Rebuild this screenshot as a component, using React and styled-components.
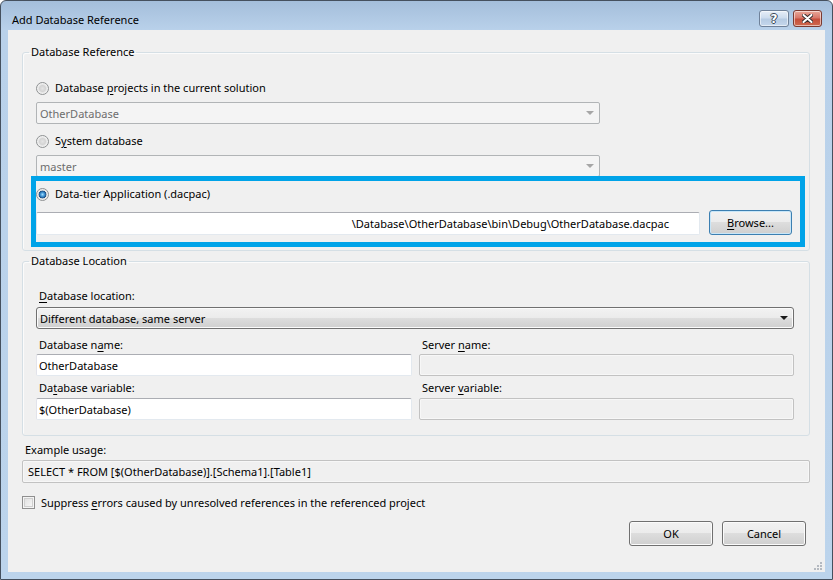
import React from "react";
import styled, { createGlobalStyle } from "styled-components";

const GlobalStyle = createGlobalStyle`
  html, body {
    margin: 0;
    padding: 0;
    background: #ffffff;
  }
  body {
    font-family: "Noto Sans", "Open Sans", sans-serif;
    font-size: 11px;
    color: #000;
  }
`;

// window frame
const Window = styled.div`
  width: 833px;
  height: 580px;
  box-sizing: border-box;
  border: 1px solid #45505e;
  border-radius: 6px 6px 0 0;
  background: linear-gradient(#a4bedb 0px, #b9d1ea 29px, #bcd4ec 100%);
  display: flex;
  flex-direction: column;
  padding: 0 7px 7px 7px;
  overflow: hidden;
`;

const TitleBar = styled.div`
  height: 29px;
  display: flex;
  align-items: flex-start;
  justify-content: space-between;
`;

const Title = styled.div`
  padding: 11px 0 0 4px;
  line-height: 16px;
  font-size: 11px;
  color: #000;
`;

const Caption = styled.div`
  display: flex;
  gap: 4px;
  margin: 9px 3px 0 0;
`;

const CaptionButton = styled.div`
  width: ${(p) => (p.$close ? 29 : 30)}px;
  height: 17px;
  box-sizing: border-box;
  border-radius: 3px;
  border: 1px solid ${(p) => (p.$close ? "#7a3a31" : "#6f8199")};
  box-shadow: inset 0 0 0 1px rgba(255, 255, 255, 0.55);
  background: ${(p) =>
    p.$close
      ? "linear-gradient(#e9a899 0%, #d8786a 45%, #c54e3b 55%, #cf6a50 100%)"
      : "linear-gradient(#e6eef8 0%, #cddcee 45%, #b6cbe3 55%, #c5d7ec 100%)"};
  display: flex;
  align-items: center;
  justify-content: center;
  color: #fff;
  font-family: "DejaVu Sans", sans-serif;
  font-weight: bold;
  font-size: 12px;
  line-height: 1;
  text-shadow: -1px 0 #3a4656, 1px 0 #3a4656, 0 -1px #3a4656, 0 1px #3a4656;
`;

const Client = styled.div`
  flex: 1;
  position: relative;
  background: #f0f0f0;
  padding: 14px 15px 0 14px;
  display: flex;
  flex-direction: column;
`;

// group boxes
const Group = styled.fieldset`
  margin: 0;
  padding: 0;
  min-inline-size: 0;
  border: 1px solid #d5dfe5;
  border-radius: 3px;
  box-shadow: inset 1px 1px 0 #fbfbfb;
  & + & {
    margin-top: 2px;
  }
`;

const Legend = styled.legend`
  margin-left: 6px;
  padding: 0 2px;
  line-height: 16px;
  font-size: 11px;
`;

const GroupBody = styled.div`
  position: relative;
  padding: ${(p) => p.$pad};
  display: flex;
  flex-direction: column;
`;

const RadioRow = styled.label`
  display: flex;
  align-items: center;
  gap: 6px;
  height: 16px;
  line-height: 16px;
  margin-top: ${(p) => p.$top}px;
  padding-top: 1px;
`;

const Radio = styled.span`
  width: 13px;
  height: 13px;
  box-sizing: border-box;
  border-radius: 50%;
  border: 1px solid #8e9192;
  background: ${(p) =>
    p.$checked
      ? "radial-gradient(circle at 50% 50%, #9fdcff 0px, #3f94d4 2px, #1b4f86 3.6px, #e2e2e2 4.2px, #f6f6f6 6px)"
      : "radial-gradient(circle at 50% 50%, #e4e4e4 0px, #d4d4d4 3px, #ececec 4.5px, #f8f8f8 6px)"};
  flex: none;
`;

const Key = styled.span`
  text-decoration: underline;
  text-underline-offset: 2px;
`;

const Combo = styled.div`
  position: relative;
  box-sizing: border-box;
  height: 22px;
  width: ${(p) => p.$width || "auto"};
  margin-top: ${(p) => p.$top}px;
  border-radius: ${(p) => (p.$disabled ? 2 : 3)}px;
  border: 1px solid ${(p) => (p.$disabled ? "#b1b4b6" : "#707070")};
  background: ${(p) =>
    p.$disabled
      ? "#f4f4f4"
      : "linear-gradient(#f2f2f2 0%, #ebebeb 50%, #dddddd 50%, #cfcfcf 100%)"};
  box-shadow: ${(p) => (p.$disabled ? "none" : "inset 0 0 0 1px #fbfbfb")};
  color: ${(p) => (p.$disabled ? "#6d6d6d" : "#000")};
  padding-left: 3px;
  line-height: 21px;
  &::after {
    content: "";
    position: absolute;
    right: 5px;
    top: 8px;
    border-left: 4px solid transparent;
    border-right: 4px solid transparent;
    border-top: 4px solid ${(p) => (p.$disabled ? "#a6a6a6" : "#1a1a1a")};
  }
`;

const Highlight = styled.div`
  position: absolute;
  left: 8px;
  top: 116px;
  width: 774px;
  height: 71px;
  box-sizing: border-box;
  border: 5px solid #00a3e8;
  pointer-events: none;
`;

const BrowseRow = styled.div`
  display: flex;
  align-items: flex-end;
  gap: 9px;
  margin-top: 8px;
`;

const TextBox = styled.div`
  box-sizing: border-box;
  height: ${(p) => p.$h || 22}px;
  width: ${(p) => p.$width || "auto"};
  margin-top: ${(p) => p.$top || 0}px;
  border: 1px solid;
  border-color: #abadb3 #e3e9ef #e3e9ef #e2e3ea;
  border-radius: 2px;
  background: #fff;
  padding: 0 ${(p) => (p.$right ? "30px" : "2px")} 0 2px;
  text-align: ${(p) => (p.$right ? "right" : "left")};
  line-height: ${(p) => (p.$h || 22) - 1}px;
  white-space: nowrap;
  overflow: hidden;
`;

const ReadOnlyBox = styled.div`
  box-sizing: border-box;
  height: ${(p) => p.$h || 22}px;
  border: 1px solid #c2c2c2;
  border-radius: 2px;
  background: #f0f0f0;
  box-shadow: inset 0 0 0 1px #f7f7f7;
  padding-left: 5px;
  line-height: ${(p) => (p.$h || 22) - 1}px;
  margin-top: ${(p) => p.$top || 0}px;
`;

const Button = styled.button`
  box-sizing: border-box;
  width: ${(p) => p.$width}px;
  height: 25px;
  padding: 0;
  border-radius: 3px;
  border: 1px solid ${(p) => (p.$focused ? "#3c7fb1" : "#707070")};
  box-shadow: inset 0 0 0 1px ${(p) => (p.$focused ? "#c8e6f8" : "#fbfbfb")};
  background: linear-gradient(#f2f2f2 0%, #ebebeb 50%, #dddddd 50%, #cfcfcf 100%);
  font-family: inherit;
  font-size: 11px;
  color: #000;
  line-height: 22px;
`;

const Label = styled.div`
  height: 16px;
  line-height: 17px;
  padding-left: 3px;
  margin-top: ${(p) => p.$top || 0}px;
`;

const FieldGrid = styled.div`
  display: grid;
  grid-template-columns: 376px 375px;
  column-gap: 7px;
  margin-top: 7px;
`;

const FieldColumn = styled.div`
  display: flex;
  flex-direction: column;
`;

const CheckRow = styled.label`
  display: flex;
  align-items: center;
  gap: 6px;
  height: 16px;
  line-height: 16px;
  margin-top: 11px;
  & > span:last-child {
    padding-top: 1px;
  }
`;

const CheckBox = styled.span`
  width: 13px;
  height: 13px;
  box-sizing: border-box;
  border: 1px solid #8f8f8f;
  background: linear-gradient(135deg, #dcdcdc, #fbfbfb);
  box-shadow: inset 0 0 0 1px #f4f4f4, inset 0 0 0 2px #cfcfcf;
  flex: none;
`;

const ButtonRow = styled.div`
  display: flex;
  justify-content: flex-end;
  gap: 9px;
  margin-top: 11px;
  padding-right: 4px;
`;

const Grip = styled.svg`
  position: absolute;
  right: 3px;
  bottom: 2px;
`;

const App = () => {
  return (
    <>
      <GlobalStyle />
      <Window>
        <TitleBar>
          <Title>Add Database Reference</Title>
          <Caption>
            <CaptionButton>?</CaptionButton>
            <CaptionButton $close>
              <svg width="11" height="9" viewBox="0 0 11 9">
                <path
                  d="M1.5 1 L9.5 8 M9.5 1 L1.5 8"
                  stroke="#3b3030"
                  strokeWidth="4"
                  strokeLinecap="round"
                />
                <path
                  d="M1.5 1 L9.5 8 M9.5 1 L1.5 8"
                  stroke="#fff"
                  strokeWidth="2"
                  strokeLinecap="round"
                />
              </svg>
            </CaptionButton>
          </Caption>
        </TitleBar>

        <Client>
          <Group>
            <Legend>Database Reference</Legend>
            <GroupBody $pad="19px 17px 15px 13px">
              <RadioRow $top={0}>
                <Radio />
                <span>
                  Database <Key>p</Key>rojects in the current solution
                </span>
              </RadioRow>
              <Combo $disabled $width="564px" $top={6}>
                OtherDatabase
              </Combo>
              <RadioRow $top={8}>
                <Radio />
                <span>
                  S<Key>y</Key>stem database
                </span>
              </RadioRow>
              <Combo $disabled $width="564px" $top={6}>
                master
              </Combo>
              <RadioRow $top={8}>
                <Radio $checked />
                <span>Data-tier Application (.dacpac)</span>
              </RadioRow>
              <BrowseRow>
                <TextBox $width="664px" $h={23} $right>
                  \Database\OtherDatabase\bin\Debug\OtherDatabase.dacpac
                </TextBox>
                <Button $width={83} $focused>
                  <Key>B</Key>rowse...
                </Button>
              </BrowseRow>
              <Highlight />
            </GroupBody>
          </Group>

          <Group>
            <Legend>Database Location</Legend>
            <GroupBody $pad="18px 15px 15px 13px">
              <Label>
                <Key>D</Key>atabase location:
              </Label>
              <Combo $top={4}>Different database, same server</Combo>
              <FieldGrid>
                <FieldColumn>
                  <Label>
                    Database n<Key>a</Key>me:
                  </Label>
                  <TextBox $top={2}>OtherDatabase</TextBox>
                  <Label $top={3}>
                    Da<Key>t</Key>abase variable:
                  </Label>
                  <TextBox $top={3}>$(OtherDatabase)</TextBox>
                </FieldColumn>
                <FieldColumn>
                  <Label>
                    Server <Key>n</Key>ame:
                  </Label>
                  <ReadOnlyBox $top={2} />
                  <Label $top={3}>
                    Server <Key>v</Key>ariable:
                  </Label>
                  <ReadOnlyBox $top={3} />
                </FieldColumn>
              </FieldGrid>
            </GroupBody>
          </Group>

          <Label $top={5}>Example usage:</Label>
          <ReadOnlyBox $h={23} $top={3}>
            SELECT * FROM [$(OtherDatabase)].[Schema1].[Table1]
          </ReadOnlyBox>

          <CheckRow>
            <CheckBox />
            <span>
              Suppress <Key>e</Key>rrors caused by unresolved references in the
              referenced project
            </span>
          </CheckRow>

          <ButtonRow>
            <Button $width={84}>OK</Button>
            <Button $width={84}>Cancel</Button>
          </ButtonRow>

          <Grip width="8" height="8" viewBox="0 0 8 8">
            {[
              [6, 0],
              [6, 3],
              [3, 3],
              [6, 6],
              [3, 6],
              [0, 6],
            ].map(([x, y], i) => (
              <rect key={i} x={x} y={y} width="2" height="2" fill="#b4b9c0" />
            ))}
          </Grip>
        </Client>
      </Window>
    </>
  );
};

export default App;
